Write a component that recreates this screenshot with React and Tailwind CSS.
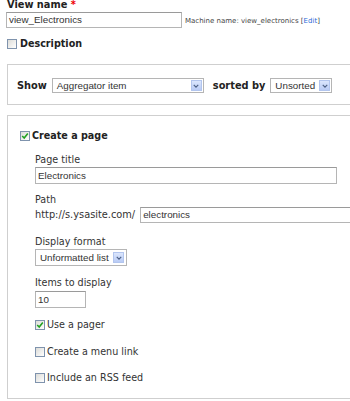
import React from "react";

const sans = "font-['DejaVu_Sans',Verdana,sans-serif]";
const arial = "font-['Liberation_Sans',Arial,sans-serif]";

function Checkbox({ checked }) {
  return (
    <span className="relative flex h-[10px] w-[10px] shrink-0 items-center justify-center border border-[#7f93ad] bg-gradient-to-br from-[#dcdcd8] to-white">
      {checked && (
        <svg viewBox="0 0 10 10" className="h-[8px] w-[8px]">
          <path d="M1.5 5 L4 7.5 L8.5 2" fill="none" stroke="#21a121" strokeWidth="2" />
        </svg>
      )}
    </span>
  );
}

function Arrow() {
  return (
    <span className="flex h-[11px] w-[11px] shrink-0 items-center justify-center border border-[#b2c5ee] bg-gradient-to-b from-[#dbe6fd] to-[#b9cbf5]">
      <svg viewBox="0 0 8 8" className="h-[6px] w-[6px]">
        <path d="M1 2.5 L4 5.5 L7 2.5" fill="none" stroke="#4d6185" strokeWidth="1.6" />
      </svg>
    </span>
  );
}

function Select({ text, className }) {
  return (
    <div
      className={`flex items-center justify-between border border-[#b5b5b5] bg-white pr-[1px] text-[9.8px] text-[#333] ${arial} ${className}`}
    >
      <span className="pl-[4px] leading-none">{text}</span>
      <Arrow />
    </div>
  );
}

function TextInput({ value, className }) {
  return (
    <div
      className={`flex items-center border border-[#b5b5b5] border-t-[#9a9a9a] bg-white pl-[2px] text-[9.8px] leading-none text-[#333] ${arial} ${className}`}
    >
      {value}
    </div>
  );
}

function CheckRow({ checked, label, className }) {
  return (
    <div className={`flex h-[10px] items-center gap-[2px] ${className}`}>
      <Checkbox checked={checked} />
      <span className="text-[9.6px] leading-[10px] text-[#333]">{label}</span>
    </div>
  );
}

export default function App() {
  return (
    <div className={`h-[401px] w-[350px] overflow-hidden bg-white ${sans}`}>
      {/* View name */}
      <div className="-mt-[1px] ml-[7px] h-[11px] text-[9.8px] font-bold leading-[11px] text-[#222]">
        View name <span className="text-[#e00]">*</span>
      </div>
      <div className="ml-[6px] mt-[2px] flex h-[16px] items-center">
        <TextInput value="view_Electronics" className="h-[16px] w-[176px]" />
        <span className="ml-[3px] mt-[2px] text-[7px] text-[#444]">
          Machine name: view_electronics [<span className="text-[#2a6ad8]">Edit</span>]
        </span>
      </div>

      {/* Description */}
      <div className="ml-[7px] mt-[11px] flex h-[10px] items-center gap-[3px]">
        <Checkbox />
        <span className="text-[9.6px] font-bold leading-[10px] text-[#222]">Description</span>
      </div>

      {/* Show / sorted by */}
      <div className="ml-[7px] mt-[15px] h-[41px] w-[360px] border border-[#cfcfcf]">
        <div className="flex items-center pl-[9px] pt-[13px]">
          <span className="text-[9.8px] font-bold leading-[15px] text-[#222]">Show</span>
          <Select text="Aggregator item" className="ml-[5px] h-[15px] w-[152px]" />
          <span className="ml-[9px] text-[9.8px] font-bold leading-[15px] text-[#222]">sorted by</span>
          <Select text="Unsorted" className="ml-[5px] h-[15px] w-[62px]" />
        </div>
      </div>

      {/* Create a page */}
      <div className="ml-[7px] mt-[10px] h-[284px] w-[360px] border border-[#cfcfcf]">
        <div className="pl-[12px] pt-[15px]">
          <div className="flex h-[10px] items-center gap-[2px]">
            <Checkbox checked />
            <span className="text-[9.6px] font-bold leading-[10px] text-[#222]">Create a page</span>
          </div>

          <div className="ml-[15px]">
            <div className="mt-[13px] h-[12px] text-[9.6px] leading-[12px] text-[#333]">Page title</div>
            <TextInput value="Electronics" className="mt-[1px] h-[17px] w-[302px]" />

            <div className="mt-[10px] h-[12px] text-[9.6px] leading-[12px] text-[#333]">Path</div>
            <div className="mt-[1px] flex h-[16px] items-center gap-[5px]">
              <span className="text-[9.8px] leading-none text-[#333]">http://s.ysasite.com/</span>
              <TextInput value="electronics" className="h-[16px] w-[250px]" />
            </div>

            <div className="mt-[13px] h-[12px] text-[9.6px] leading-[12px] text-[#333]">Display format</div>
            <Select text="Unformatted list" className="mt-[1px] h-[17px] w-[92px] !pr-[2px]" />

            <div className="mt-[11px] h-[12px] text-[9.6px] leading-[12px] text-[#333]">Items to display</div>
            <TextInput value="10" className="mt-[2px] h-[17px] w-[51px]" />

            <CheckRow checked label="Use a pager" className="mt-[12px]" />
            <CheckRow label="Create a menu link" className="mt-[17px]" />
            <CheckRow label="Include an RSS feed" className="mt-[16px]" />
          </div>
        </div>
      </div>
    </div>
  );
}
